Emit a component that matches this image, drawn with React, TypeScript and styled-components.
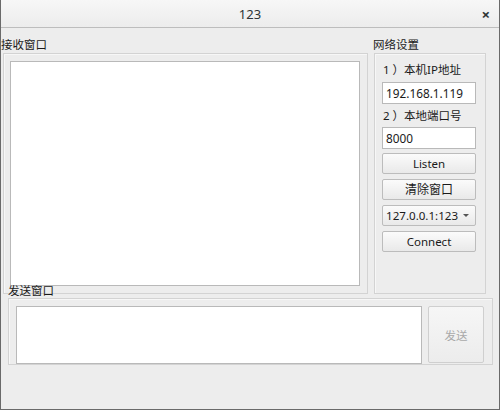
import React from "react";
import styled, { createGlobalStyle } from "styled-components";

const Global = createGlobalStyle`
  html, body { margin: 0; padding: 0; background: #ededed; }
  body { font-family: "Noto Sans", "Noto Sans CJK SC", sans-serif; }
  * { box-sizing: border-box; }
`;

const Window = styled.div`
  width: 500px;
  height: 410px;
  background: #ededed;
  border-left: 1px solid #6a6a6a;
  border-right: 1px solid #6a6a6a;
  border-bottom: 1px solid #6a6a6a;
  display: flex;
  flex-direction: column;
  overflow: hidden;
  font-family: "Noto Sans", "Noto Sans CJK SC", sans-serif;
  color: #2e3436;
`;

const TitleBar = styled.div`
  height: 28px;
  flex: none;
  display: flex;
  align-items: center;
  justify-content: center;
  position: relative;
  background: linear-gradient(#f7f7f7, #ececec);
  border-bottom: 1px solid #bdbdbd;
  font-size: 13px;
  color: #2e3436;
`;

const Close = styled.span`
  position: absolute;
  right: 9px;
  top: 4px;
  font-size: 15px;
  font-weight: bold;
  color: #2e3436;
`;

const Body = styled.div`
  flex: 1;
  display: flex;
  flex-direction: column;
  padding-top: 7px;
`;

const TopRow = styled.div`
  display: flex;
  align-items: flex-start;
`;

const Column = styled.div<{ $w: number; $ml: number }>`
  width: ${(p) => p.$w}px;
  margin-left: ${(p) => p.$ml}px;
  display: flex;
  flex-direction: column;
`;

const GroupLabel = styled.div`
  height: 18px;
  line-height: 18px;
  font-family: "Noto Sans CJK SC", sans-serif;
  font-size: 11.5px;
  color: #1a1a1a;
  white-space: nowrap;
`;

const Frame = styled.div<{ $ml: number }>`
  margin-left: ${(p) => p.$ml}px;
  height: 241px;
  border: 1px solid #d3d3d3;
  box-shadow: inset 1px 1px 0 #f7f7f7;
`;

const ReceiveFrame = styled(Frame)`
  padding: 7px 7px 7px 6px;
  display: flex;
`;

const TextArea = styled.div`
  flex: 1;
  background: #ffffff;
  border: 1px solid #b9b9b9;
`;

const NetFrame = styled(Frame)`
  padding: 7px 9px 0 7px;
  display: flex;
  flex-direction: column;
`;

const ItemLabel = styled.div<{ $mt?: number }>`
  margin-top: ${(p) => p.$mt ?? 0}px;
  height: 18px;
  line-height: 18px;
  font-size: 11.5px;
  color: #1a1a1a;
  white-space: nowrap;
  padding-left: 1px;
`;

const Paren = styled.span`
  margin-left: 3px;
`;

const Input = styled.div<{ $mt: number }>`
  margin-top: ${(p) => p.$mt}px;
  height: 22px;
  line-height: 20px;
  padding-left: 3px;
  background: #fff;
  border: 1px solid #b9b9b9;
  font-size: 11.8px;
  color: #1a1a1a;
`;

const Button = styled.div<{ $mt: number; $cjk?: boolean }>`
  margin-top: ${(p) => p.$mt}px;
  height: 21px;
  line-height: 19px;
  text-align: center;
  border: 1px solid #bcbcbc;
  border-radius: 2px;
  background: linear-gradient(#fbfbfb, #e9e9e9);
  font-size: ${(p) => (p.$cjk ? 12 : 11.5)}px;
  color: #1a1a1a;
`;

const Combo = styled(Button)`
  text-align: left;
  padding-left: 3px;
  display: flex;
  align-items: center;
  justify-content: space-between;
  padding-right: 6px;
  font-size: 11.6px;
`;

const Arrow = styled.span`
  width: 0;
  height: 0;
  border-left: 3px solid transparent;
  border-right: 3px solid transparent;
  border-top: 3px solid #555;
`;

const SendLabel = styled(GroupLabel)`
  margin-top: -13px;
  margin-left: 7px;
  height: 17px;
`;

const SendFrame = styled.div`
  margin-left: 7px;
  width: 485px;
  height: 67px;
  border: 1px solid #d3d3d3;
  box-shadow: inset 1px 1px 0 #f7f7f7;
  padding: 7px 8px 0 7px;
  display: flex;
  gap: 6px;
`;

const SendArea = styled.div`
  width: 406px;
  height: 58px;
  background: #fff;
  border: 1px solid #b9b9b9;
`;

const SendButton = styled.div`
  width: 56px;
  height: 57px;
  display: flex;
  align-items: center;
  justify-content: center;
  border: 1px solid #cfcfcf;
  border-radius: 2px;
  background: linear-gradient(#f6f6f6, #ececec);
  color: #a9a9a9;
  font-size: 11.5px;
`;

export default function App() {
  return (
    <>
      <Global />
      <Window>
        <TitleBar>
          123
          <Close>×</Close>
        </TitleBar>
        <Body>
          <TopRow>
            <Column $w={367} $ml={0}>
              <GroupLabel>接收窗口</GroupLabel>
              <ReceiveFrame $ml={2}>
                <TextArea />
              </ReceiveFrame>
            </Column>
            <Column $w={113} $ml={5}>
              <GroupLabel>网络设置</GroupLabel>
              <NetFrame $ml={1}>
                <ItemLabel>
                  1<Paren>）</Paren>本机IP地址
                </ItemLabel>
                <Input $mt={3}>192.168.1.119</Input>
                <ItemLabel $mt={3}>
                  2<Paren>）</Paren>本地端口号
                </ItemLabel>
                <Input $mt={2}>8000</Input>
                <Button $mt={4}>Listen</Button>
                <Button $mt={5} $cjk>
                  清除窗口
                </Button>
                <Combo $mt={5}>
                  <span>127.0.0.1:123</span>
                  <Arrow />
                </Combo>
                <Button $mt={5}>Connect</Button>
              </NetFrame>
            </Column>
          </TopRow>
          <SendLabel>发送窗口</SendLabel>
          <SendFrame>
            <SendArea />
            <SendButton>发送</SendButton>
          </SendFrame>
        </Body>
      </Window>
    </>
  );
}
